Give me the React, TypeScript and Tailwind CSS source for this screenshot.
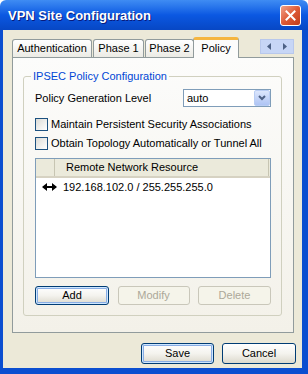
import clsx from 'clsx';

function XpButton({
  children,
  disabled,
  focused,
  className,
}: {
  children: React.ReactNode;
  disabled?: boolean;
  focused?: boolean;
  className?: string;
}) {
  return (
    <button
      type="button"
      className={clsx(
        'flex items-center justify-center rounded-[3px] border text-[11px] leading-none',
        disabled
          ? 'border-[#C9C7BA] bg-[#F5F4EA] text-[#ACA899]'
          : 'border-[#003C74] bg-linear-to-b from-white via-[#F4F3EE] to-[#DCD9CD] text-black',
        focused && 'shadow-[inset_0_0_0_1px_#CEE7FF,inset_0_0_0_2px_#89ADE4]',
        className,
      )}
    >
      {children}
    </button>
  );
}

function Checkbox({ label }: { label: string }) {
  return (
    <label className="flex h-[13px] items-center gap-[3px]">
      <span className="h-[13px] w-[13px] shrink-0 border border-[#1C5180] bg-linear-to-br from-[#DCDCD7] to-white" />
      <span className="whitespace-nowrap text-[11px] leading-none text-black">{label}</span>
    </label>
  );
}

function Tab({ label, active, className }: { label: string; active?: boolean; className?: string }) {
  if (active) {
    return (
      <div
        className={clsx(
          'relative z-10 -mb-px flex h-[21px] items-center justify-center whitespace-nowrap rounded-t-[3px] border-x border-t-[3px] border-x-[#919B9C] border-t-[#F5B53F] bg-[#FCFCFB] pb-[2px] text-[11px]',
          className,
        )}
      >
        {label}
      </div>
    );
  }
  return (
    <div
      className={clsx(
        'flex h-[18px] items-center justify-center whitespace-nowrap rounded-t-[3px] border-x border-t border-[#919B9C] bg-linear-to-b from-white to-[#ECEBE5] text-[11px]',
        className,
      )}
    >
      {label}
    </div>
  );
}

function ArrowBoth() {
  return (
    <svg width="15" height="8" viewBox="0 0 15 8" className="shrink-0">
      <path d="M0 4 L5 0 V3 H10 V0 L15 4 L10 8 V5 H5 V8 Z" fill="#000" />
    </svg>
  );
}

export default function App() {
  return (
    <div className="h-[374px] w-[308px] bg-white font-['Liberation_Sans',Arial,sans-serif] text-black">
      <div className="flex h-full flex-col overflow-hidden rounded-t-[6px]">
        {/* title bar */}
        <div className="flex h-[30px] shrink-0 items-center justify-between bg-linear-to-b from-[#3F8CF3] via-[#0B58E2] to-[#0747C4] pl-[8px] pr-[7px]">
          <span className="text-[13px] font-bold leading-none text-white [text-shadow:1px_1px_0_#0A1A7A]">
            VPN Site Configuration
          </span>
          <div className="flex h-[21px] w-[21px] items-center justify-center rounded-[3px] border border-white bg-linear-to-br from-[#F0A088] via-[#DD5A36] to-[#C23C18]">
            <svg width="11" height="11" viewBox="0 0 11 11">
              <path d="M1.5 1.5 L9.5 9.5 M9.5 1.5 L1.5 9.5" stroke="#fff" strokeWidth="2" strokeLinecap="square" />
            </svg>
          </div>
        </div>

        {/* body */}
        <div className="flex flex-1 flex-col border-b-[6px] border-l-[3px] border-r-[6px] border-[#0B4ED0] bg-[#ECE9D8] pl-[9px] pr-[8px] pt-[6px]">
          {/* tabs */}
          <div className="flex h-[21px] items-end justify-between">
            <div className="flex items-end">
              <Tab label="Authentication" className="w-[80px]" />
              <Tab label="Phase 1" className="ml-px w-[51px]" />
              <Tab label="Phase 2" className="ml-px w-[49px]" />
              <Tab label="Policy" active className="-ml-px w-[46px]" />
            </div>
            <div className="mb-[3px] flex h-[15px] border border-[#B8C8EC] bg-[#C7D6F6]">
              <div className="flex w-[16px] items-center justify-center">
                <svg width="4" height="7" viewBox="0 0 4 7">
                  <path d="M4 0 L0 3.5 L4 7 Z" fill="#4D6185" />
                </svg>
              </div>
              <div className="flex w-[16px] items-center justify-center">
                <svg width="4" height="7" viewBox="0 0 4 7">
                  <path d="M0 0 L4 3.5 L0 7 Z" fill="#4D6185" />
                </svg>
              </div>
            </div>
          </div>

          {/* tab panel */}
          <div className="h-[276px] border border-[#919B9C] bg-linear-to-b from-[#FCFCFB] to-[#F3F1E9] pl-[10px] pr-[11px] pt-[12px]">
            <fieldset className="rounded-[3px] border border-[#D0D0BF] pb-[10px] pl-[11px] pr-[10px]">
              <legend className="ml-[-4px] px-[2px] text-[11px] leading-[13px] text-[#0046D5]">
                IPSEC Policy Configuration
              </legend>
              <div className="mt-[6px] flex h-[18px] items-center justify-between">
                <span className="text-[11px] leading-none">Policy Generation Level</span>
                <div className="flex h-[18px] w-[88px] items-center border border-[#7F9DB9] bg-white">
                  <span className="flex-1 pl-[3px] text-[11px] leading-none">auto</span>
                  <div className="flex h-[16px] w-[16px] items-center justify-center rounded-[2px] border border-[#B9CDF4] bg-linear-to-b from-[#DCE6FC] to-[#AEC4F4]">
                    <svg width="8" height="6" viewBox="0 0 8 6">
                      <path d="M1 1 L4 4 L7 1" stroke="#4D6185" strokeWidth="2" fill="none" />
                    </svg>
                  </div>
                </div>
              </div>

              <div className="mt-[11px] flex flex-col gap-[6px]">
                <Checkbox label="Maintain Persistent Security Associations" />
                <Checkbox label="Obtain Topology Automatically or Tunnel All" />
              </div>

              {/* list */}
              <div className="mt-[8px] h-[120px] border border-[#7F9DB9] bg-white">
                <div className="flex h-[19px] border-b-2 border-[#D6D2C2] bg-[#EBEADB] text-[11px]">
                  <div className="w-[19px] border-r border-[#C7C5B2]" />
                  <div className="flex flex-1 items-center border-r border-[#C7C5B2] pl-[11px]">
                    Remote Network Resource
                  </div>
                  <div className="w-[1px]" />
                </div>
                <div className="flex h-[18px] items-center gap-[6px] pl-[6px] text-[11px]">
                  <ArrowBoth />
                  <span>192.168.102.0 / 255.255.255.0</span>
                </div>
              </div>

              <div className="mt-[8px] flex justify-between">
                <XpButton focused className="h-[19px] w-[74px]">
                  Add
                </XpButton>
                <XpButton disabled className="h-[19px] w-[72px]">
                  Modify
                </XpButton>
                <XpButton disabled className="h-[19px] w-[73px]">
                  Delete
                </XpButton>
              </div>
            </fieldset>
          </div>

          {/* footer */}
          <div className="-mr-[2px] mt-[10px] flex justify-end gap-[8px]">
            <XpButton focused className="h-[21px] w-[73px]">
              Save
            </XpButton>
            <XpButton className="h-[21px] w-[74px]">Cancel</XpButton>
          </div>
        </div>
      </div>
    </div>
  );
}
